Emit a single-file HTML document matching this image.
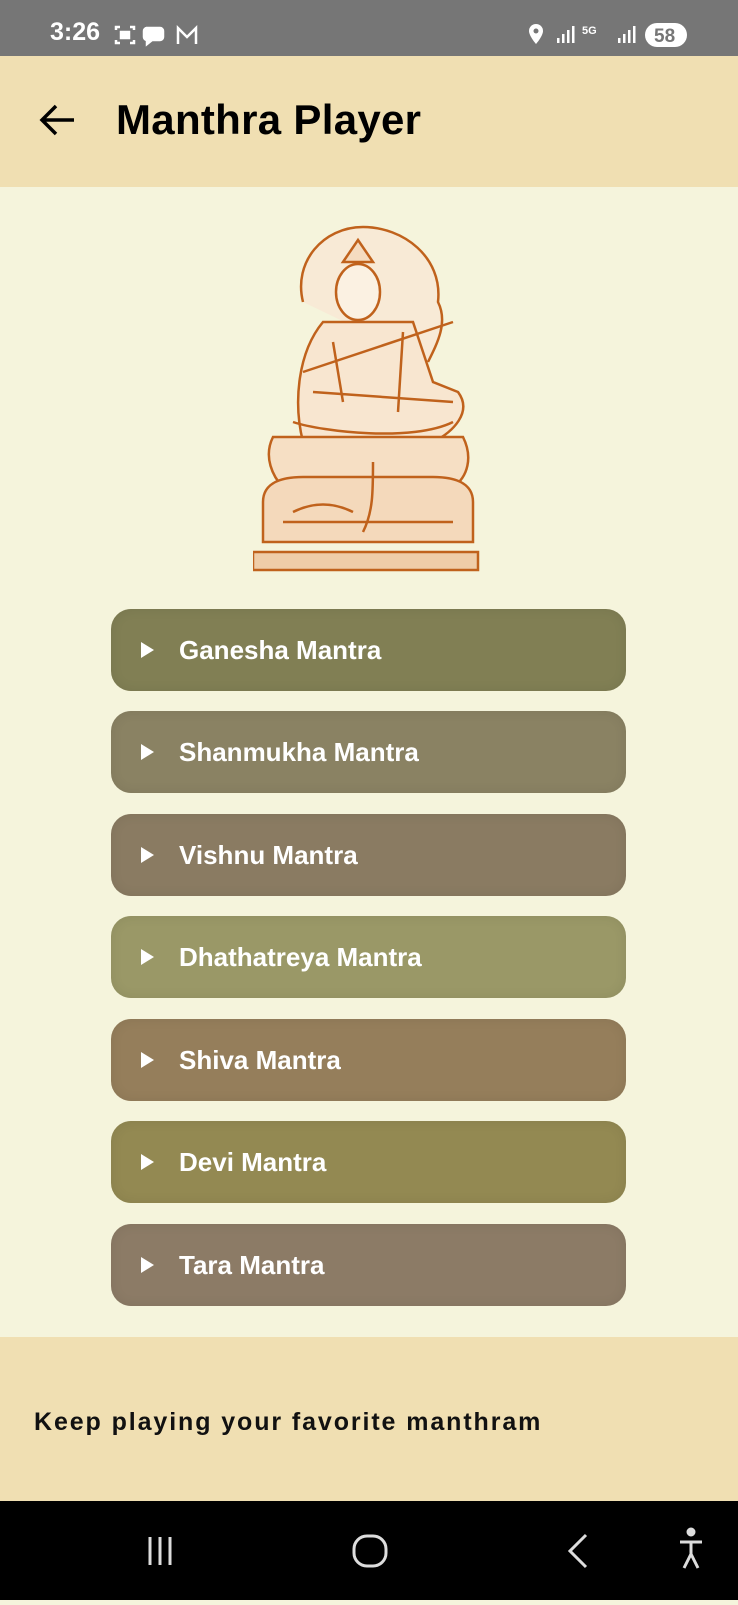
<!DOCTYPE html>
<html><head><meta charset="utf-8"><style>
*{margin:0;padding:0;box-sizing:border-box}
body{width:738px;height:1600px;background:#f5f4dc;font-family:"Liberation Sans",sans-serif;position:relative;overflow:hidden}
.sb{position:absolute;left:0;top:0;width:738px;height:56px;background:#767676;color:#fff}
.hd{position:absolute;left:0;top:56px;width:738px;height:131px;background:#f0dfb2}
.hd h1{position:absolute;left:116px;top:40px;font-size:42px;font-weight:bold;color:#000;letter-spacing:0.3px}
.btn{position:absolute;left:111px;width:515px;height:82px;border-radius:20px;color:#fff;font-size:26px;font-weight:bold;box-shadow:inset 0 0 12px rgba(0,0,0,0.08)}
.btn span{position:absolute;left:68px;top:26px}
.btn i{position:absolute;left:30px;top:33px;width:0;height:0;border-left:13px solid #fff;border-top:8px solid transparent;border-bottom:8px solid transparent}
.ft{position:absolute;left:0;top:1337px;width:738px;height:164px;background:#f0dfb2}
.ft p{position:absolute;left:34px;top:71px;font-size:25px;font-weight:bold;color:#111;letter-spacing:1.9px}
.nav{position:absolute;left:0;top:1501px;width:738px;height:99px;background:#000}
</style></head><body>
<div class="sb">
<div style="position:absolute;left:50px;top:18px;font-size:25px;font-weight:bold">3:26</div>
<svg style="position:absolute;left:114px;top:24px" width="96" height="24" viewBox="0 0 96 24" fill="none" stroke="#fff" stroke-width="2.5">
<path d="M2 6V3h4M16 3h4v3M2 16v3h4M16 19h4v-3"/><rect x="7" y="8" width="8" height="6" fill="#fff"/>
<path d="M32 4h14a3 3 0 0 1 3 3v6a3 3 0 0 1-3 3h-8l-5 4v-4a3 3 0 0 1-3-3V7a3 3 0 0 1 3-3z" fill="#fff"/>
<path d="M64 20V4l9 9 9-9v16"/></svg>
<svg style="position:absolute;left:525px;top:22px" width="165" height="28" viewBox="0 0 165 28">
<path d="M11 2a7 7 0 0 0-7 7c0 5 7 13 7 13s7-8 7-13a7 7 0 0 0-7-7z" fill="#fff"/><circle cx="11" cy="9" r="2.5" fill="#767676"/>
<g fill="#fff"><rect x="32" y="16" width="2.5" height="5"/><rect x="37" y="12" width="2.5" height="9"/><rect x="42" y="8" width="2.5" height="13"/><rect x="47" y="4" width="2.5" height="17"/>
<text x="57" y="12" font-size="11" font-weight="bold" font-family="Liberation Sans">5G</text>
<rect x="93" y="16" width="2.5" height="5"/><rect x="98" y="12" width="2.5" height="9"/><rect x="103" y="8" width="2.5" height="13"/><rect x="108" y="4" width="2.5" height="17"/>
<rect x="120" y="1" width="42" height="24" rx="12"/></g>
<text x="129" y="20" font-size="19" font-weight="bold" fill="#767676" font-family="Liberation Sans">58</text></svg>
</div>
<div class="hd">
<svg style="position:absolute;left:38px;top:47px" width="38" height="34" viewBox="0 0 38 34" fill="none" stroke="#000" stroke-width="3.5"><path d="M36 17H4M18 3L4 17l14 14"/></svg>
<h1>Manthra Player</h1>
</div>
<svg style="position:absolute;left:253px;top:222px" width="232" height="357" viewBox="0 0 232 357" fill="none" stroke="#c0621c" stroke-width="2.5">
<path d="M50 80c-10-40 20-75 60-75s80 30 75 75c10 20 0 40-10 60" fill="#f8ead6"/>
<ellipse cx="105" cy="70" rx="22" ry="28" fill="#fbf1e2"/>
<path d="M90 40l15-22 15 22z" fill="#f5dcc0"/>
<path d="M70 100c-25 30-30 80-20 120l30 20 60-10 40-10c20-10 40-30 25-50l-25-10-20-60z" fill="#f8e6d0"/>
<path d="M50 150l150-50M60 170l140 10M40 200c30 10 120 20 160 0M80 120l10 60M150 110l-5 80"/>
<path d="M20 215c-10 20 0 40 10 50h170c15-10 20-30 10-50z" fill="#f6dfc4"/>
<path d="M10 280c0-20 20-25 40-25h130c20 0 40 5 40 25v40H10z" fill="#f4d9bb"/>
<path d="M0 330h225v18H0z" fill="#efcda8"/>
<path d="M120 240c0 30 0 50-10 70M30 300h170M40 290c20-10 40-10 60 0"/>
</svg>
<div class="btn" style="top:609px;background:#817f54"><i></i><span>Ganesha Mantra</span></div>
<div class="btn" style="top:711px;background:#8a8263"><i></i><span>Shanmukha Mantra</span></div>
<div class="btn" style="top:814px;background:#8a7b62"><i></i><span>Vishnu Mantra</span></div>
<div class="btn" style="top:916px;background:#9a9867"><i></i><span>Dhathatreya Mantra</span></div>
<div class="btn" style="top:1019px;background:#957e5b"><i></i><span>Shiva Mantra</span></div>
<div class="btn" style="top:1121px;background:#938952"><i></i><span>Devi Mantra</span></div>
<div class="btn" style="top:1224px;background:#8c7b66"><i></i><span>Tara Mantra</span></div>
<div class="ft"><p>Keep playing your favorite manthram</p></div>
<div class="nav">
<svg width="738" height="99" viewBox="0 0 738 99" fill="none" stroke="#ddd" stroke-width="3">
<path d="M150 36v28M160 36v28M170 36v28"/>
<rect x="354" y="35" width="32" height="30" rx="13"/>
<path d="M586 34l-16 16 16 16"/>
<circle cx="691" cy="31" r="3" fill="#ddd"/><path d="M680 41h22M691 41v12l-7 14M691 53l7 14"/>
</svg></div>
</body></html>
